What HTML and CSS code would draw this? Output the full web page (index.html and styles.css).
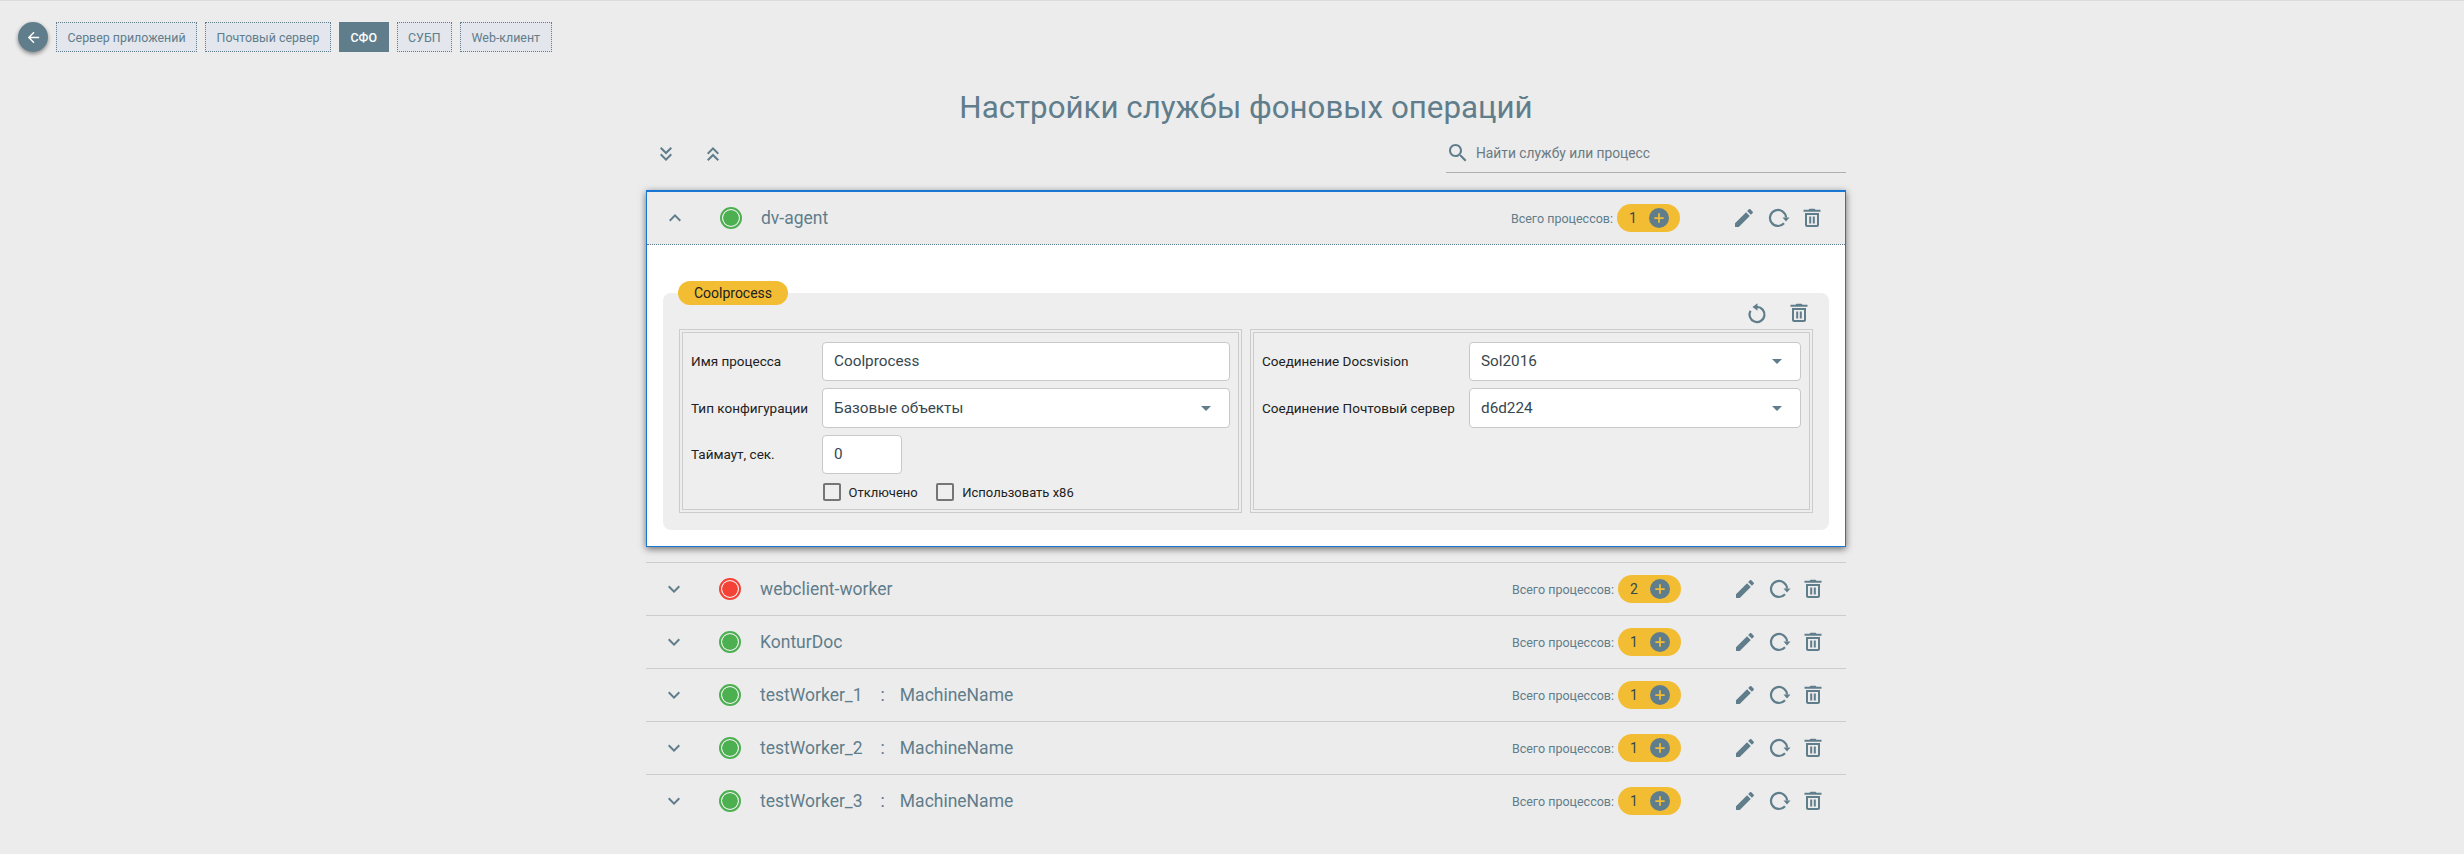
FILE: index.html
```html
<!DOCTYPE html>
<html lang="ru">
<head>
<meta charset="utf-8">
<title>Настройки службы фоновых операций</title>
<link rel="stylesheet" href="styles.css">
</head>
<body>
<svg class="defs" aria-hidden="true">
  <symbol id="i-edit" viewBox="0 0 24 24"><path d="M3 17.25V21h3.75L17.81 9.94l-3.75-3.75L3 17.25zM20.71 7.04c.39-.39.39-1.02 0-1.41l-2.34-2.34c-.39-.39-1.02-.39-1.41 0l-1.83 1.83 3.75 3.75 1.83-1.83z"/></symbol>
  <symbol id="i-refresh" viewBox="0 0 24 24"><path d="M18 17.3A8 8 0 1 1 20 11.5" fill="none" stroke="currentColor" stroke-width="2.2"/><path d="M16.5 11.5h7L20 15.5z"/></symbol>
  <symbol id="i-trash" viewBox="0 0 24 24"><path fill-rule="evenodd" d="M5 7h14v12c0 1.1-.9 2-2 2H7c-1.1 0-2-.9-2-2V7zm2 2v10h10V9H7zM3.5 3.7H8.5l1-1h5l1 1h5v2h-17z"/><path d="M9.2 10.5h2v7h-2zM12.8 10.5h2v7h-2z"/></symbol>
  <symbol id="i-reset" viewBox="0 0 24 24"><path d="M12 6A7.5 7.5 0 1 1 5.5 9.75" fill="none" stroke="currentColor" stroke-width="2.2"/><path d="M12.5 2.2v7.6L7.5 6z"/></symbol>
  <symbol id="i-down" viewBox="0 0 24 24"><path d="M7.41 8.59 12 13.17l4.59-4.58L18 10l-6 6-6-6z"/></symbol>
  <symbol id="i-up" viewBox="0 0 24 24"><path d="M7.41 15.41 12 10.83l4.59 4.58L18 14l-6-6-6 6z"/></symbol>
  <symbol id="i-ddown" viewBox="0 0 24 24"><path d="M18 6.41 16.59 5 12 9.58 7.41 5 6 6.41l6 6zM18 13l-1.41-1.41L12 16.17l-4.59-4.58L6 13l6 6z"/></symbol>
  <symbol id="i-dup" viewBox="0 0 24 24"><path d="M6 17.59 7.41 19 12 14.42 16.59 19 18 17.59l-6-6zM6 11l1.41 1.41L12 7.83l4.59 4.58L18 11l-6-6z"/></symbol>
  <symbol id="i-search" viewBox="0 0 24 24"><path d="M15.5 14h-.79l-.28-.27C15.41 12.59 16 11.11 16 9.5 16 5.91 13.09 3 9.5 3S3 5.91 3 9.5 5.91 16 9.5 16c1.61 0 3.09-.59 4.23-1.57l.27.28v.79l5 4.99L20.49 19l-4.99-5zm-6 0C7.01 14 5 11.99 5 9.5S7.01 5 9.5 5 14 7.01 14 9.5 11.99 14 9.5 14z"/></symbol>
  <symbol id="i-back" viewBox="0 0 24 24"><path d="M20 11H7.83l5.59-5.59L12 4l-8 8 8 8 1.41-1.41L7.83 13H20v-2z"/></symbol>
  <symbol id="i-plus" viewBox="0 0 24 24"><path d="M10.5 4h3v6.5H20v3h-6.5V20h-3v-6.5H4v-3h6.5z"/></symbol>
</svg>

<nav class="tabs">
  <button class="back"><svg class="ico-back"><use href="#i-back"/></svg></button>
  <a class="tab">Сервер приложений</a>
  <a class="tab">Почтовый сервер</a>
  <a class="tab tab-active">СФО</a>
  <a class="tab">СУБП</a>
  <a class="tab">Web-клиент</a>
</nav>

<main class="main">
  <h1 class="title">Настройки службы фоновых операций</h1>

  <div class="toolbar">
    <div class="tool-left">
      <svg class="ico"><use href="#i-ddown"/></svg>
      <svg class="ico"><use href="#i-dup"/></svg>
    </div>
    <div class="search">
      <svg class="ico search-ico"><use href="#i-search"/></svg>
      <span>Найти службу или процесс</span>
    </div>
  </div>

  <section class="card">
    <header class="row-head">
      <svg class="ico"><use href="#i-up"/></svg>
      <span class="status status-ok"></span>
      <span class="name">dv-agent</span>
      <span class="total">Всего процессов:</span>
      <span class="pill"><span class="count">1</span><span class="plus"><svg class="ico-plus"><use href="#i-plus"/></svg></span></span>
      <span class="actions">
        <svg class="ico"><use href="#i-edit"/></svg>
        <svg class="ico"><use href="#i-refresh"/></svg>
        <svg class="ico"><use href="#i-trash"/></svg>
      </span>
    </header>
    <div class="card-body">
      <span class="proc-tag">Coolprocess</span>
      <div class="panel">
        <div class="panel-tools">
          <svg class="ico"><use href="#i-reset"/></svg>
          <svg class="ico"><use href="#i-trash"/></svg>
        </div>
        <div class="sets">
          <div class="set">
            <div class="field">
              <label class="lbl lbl-a">Имя процесса</label>
              <div class="ctl">Coolprocess</div>
            </div>
            <div class="field">
              <label class="lbl lbl-a">Тип конфигурации</label>
              <div class="ctl ctl-select">Базовые объекты</div>
            </div>
            <div class="field">
              <label class="lbl lbl-a">Таймаут, сек.</label>
              <div class="ctl ctl-num">0</div>
            </div>
            <div class="checks">
              <span class="check"><span class="box"></span>Отключено</span>
              <span class="check"><span class="box"></span>Использовать x86</span>
            </div>
          </div>
          <div class="set">
            <div class="field">
              <label class="lbl lbl-b">Соединение Docsvision</label>
              <div class="ctl ctl-select">Sol2016</div>
            </div>
            <div class="field">
              <label class="lbl lbl-b">Соединение Почтовый сервер</label>
              <div class="ctl ctl-select">d6d224</div>
            </div>
          </div>
        </div>
      </div>
    </div>
  </section>

  <div class="rows">
    <div class="row-head row">
      <svg class="ico"><use href="#i-down"/></svg>
      <span class="status status-bad"></span>
      <span class="name">webclient-worker</span>
      <span class="total">Всего процессов:</span>
      <span class="pill"><span class="count">2</span><span class="plus"><svg class="ico-plus"><use href="#i-plus"/></svg></span></span>
      <span class="actions"><svg class="ico"><use href="#i-edit"/></svg><svg class="ico"><use href="#i-refresh"/></svg><svg class="ico"><use href="#i-trash"/></svg></span>
    </div>
    <div class="row-head row">
      <svg class="ico"><use href="#i-down"/></svg>
      <span class="status status-ok"></span>
      <span class="name">KonturDoc</span>
      <span class="total">Всего процессов:</span>
      <span class="pill"><span class="count">1</span><span class="plus"><svg class="ico-plus"><use href="#i-plus"/></svg></span></span>
      <span class="actions"><svg class="ico"><use href="#i-edit"/></svg><svg class="ico"><use href="#i-refresh"/></svg><svg class="ico"><use href="#i-trash"/></svg></span>
    </div>
    <div class="row-head row">
      <svg class="ico"><use href="#i-down"/></svg>
      <span class="status status-ok"></span>
      <span class="name">testWorker_1<span class="colon">:</span>MachineName</span>
      <span class="total">Всего процессов:</span>
      <span class="pill"><span class="count">1</span><span class="plus"><svg class="ico-plus"><use href="#i-plus"/></svg></span></span>
      <span class="actions"><svg class="ico"><use href="#i-edit"/></svg><svg class="ico"><use href="#i-refresh"/></svg><svg class="ico"><use href="#i-trash"/></svg></span>
    </div>
    <div class="row-head row">
      <svg class="ico"><use href="#i-down"/></svg>
      <span class="status status-ok"></span>
      <span class="name">testWorker_2<span class="colon">:</span>MachineName</span>
      <span class="total">Всего процессов:</span>
      <span class="pill"><span class="count">1</span><span class="plus"><svg class="ico-plus"><use href="#i-plus"/></svg></span></span>
      <span class="actions"><svg class="ico"><use href="#i-edit"/></svg><svg class="ico"><use href="#i-refresh"/></svg><svg class="ico"><use href="#i-trash"/></svg></span>
    </div>
    <div class="row-head row">
      <svg class="ico"><use href="#i-down"/></svg>
      <span class="status status-ok"></span>
      <span class="name">testWorker_3<span class="colon">:</span>MachineName</span>
      <span class="total">Всего процессов:</span>
      <span class="pill"><span class="count">1</span><span class="plus"><svg class="ico-plus"><use href="#i-plus"/></svg></span></span>
      <span class="actions"><svg class="ico"><use href="#i-edit"/></svg><svg class="ico"><use href="#i-refresh"/></svg><svg class="ico"><use href="#i-trash"/></svg></span>
    </div>
  </div>
</main>
</body>
</html>
```

FILE: styles.css
```css
* { box-sizing: border-box; }
html, body { margin: 0; padding: 0; }
body {
  height: 854px;
  overflow: hidden;
  background: #ececec;
  border-top: 1px solid #dcdcdc;
  font-family: Roboto, "Liberation Sans", sans-serif;
  color: #607d8b;
}
.defs { display: none; }

.tabs { display: flex; align-items: center; gap: 8px; padding: 21px 0 0 18px; height: 51px; }
.back {
  width: 30px; height: 30px; padding: 0; border: 0; border-radius: 50%;
  background: #607d8b; box-shadow: 0 2px 4px rgba(0,0,0,.45);
  display: flex; align-items: center; justify-content: center; color: #fff;
}
.ico-back { width: 17px; height: 17px; fill: currentColor; }
.tab {
  height: 30px; padding: 0 10.5px; display: flex; align-items: center;
  background: #e3e6ec; border: 1px dotted #607d8b; font-size: 12.4px; color: #607d8b;
}
.tab-active { background: #607d8b; border: 1px solid #607d8b; color: #fff; font-weight: 500; }

.main { width: 1200px; margin-left: 646px; }
.title { margin: 36px 0 0; font-size: 31.3px; line-height: 40px; font-weight: 400; text-align: center; color: #607d8b; }

.ico { width: 24px; height: 24px; fill: currentColor; color: #607d8b; flex: none; display: block; }

.toolbar { display: flex; justify-content: space-between; align-items: stretch; height: 39px; margin: 6px 0 17px; }
.tool-left { display: flex; align-items: center; gap: 23px; padding-left: 8px; }
.search {
  width: 400px; display: flex; align-items: center; gap: 6px; padding-bottom: 1px;
  border-bottom: 1px solid #b0b0b0; font-size: 13.8px; color: #6b7a82;
}

.card {
  border: 1px solid #1976d2; border-top-width: 2px;
  box-shadow: 0 2px 7px rgba(0,0,0,.55);
  background: #fff;
}
.row-head {
  display: flex; align-items: center; height: 53px; padding: 0 21px 0 16px;
  background: #ececec; border-bottom: 1px dotted #607d8b;
}
.status {
  width: 22px; height: 22px; margin-left: 33px; padding: 1px; flex: none;
  border-radius: 50%; border: 2px solid; background-clip: content-box;
  box-shadow: inset 0 0 0 1px #f4f4f4;
}
.status-ok { border-color: #4caf50; background-color: #4caf50; }
.status-bad { border-color: #f44336; background-color: #f44336; }
.name { margin-left: 19px; font-size: 17.5px; color: #607d8b; }
.colon { margin: 0 15px 0 18px; }
.total { margin-left: auto; font-size: 12.5px; color: #607d8b; }
.pill {
  width: 63px; height: 28px; margin-left: 4px; border-radius: 14px; background: #f2bd33;
  display: flex; align-items: center; flex: none;
}
.count { width: 32px; text-align: center; font-size: 14px; color: #37474f; }
.plus { width: 20px; height: 20px; border-radius: 50%; background: #607d8b; display: flex; align-items: center; justify-content: center; }
.ico-plus { width: 14px; height: 14px; fill: #f2bd33; }
.actions { display: flex; gap: 10px; margin-left: 52px; }

.card-body { padding: 36px 16px 16px; }
.proc-tag {
  display: block; position: relative; width: 110px; height: 24px; margin: 0 0 -12px 15px;
  border-radius: 12px; background: #f2bd33; color: #212121; font-size: 14px; line-height: 24px; text-align: center;
}
.panel { background: #eee; border-radius: 8px; padding: 8px 16px 17px; }
.panel-tools { display: flex; justify-content: flex-end; gap: 18px; padding-right: 2px; height: 28px; }
.sets { display: grid; grid-template-columns: 1fr 1fr; gap: 8px; }
.set {
  height: 184px; border: 4px double #ccc; padding: 8.5px 8px 0 8px;
  display: flex; flex-direction: column; gap: 7px;
}
.field { display: flex; align-items: center; }
.lbl { font-size: 13.5px; color: #212121; flex: none; }
.lbl-a { width: 131px; }
.lbl-b { width: 207px; }
.ctl {
  flex: 1; height: 39.5px; padding: 0 11px; display: flex; align-items: center; position: relative;
  background: #fff; border: 1px solid #c8c8c8; border-radius: 4px; font-size: 15.3px; color: #37474f;
}
.ctl-num { flex: none; width: 80px; }
.ctl-select::after {
  content: ""; position: absolute; right: 18px; top: 50%; margin-top: -2px;
  border: 5px solid transparent; border-top: 5px solid #607d8b; border-bottom: 0;
}
.checks { display: flex; gap: 18.5px; margin: 2px 0 0 131.5px; }
.check { display: flex; align-items: center; gap: 8px; font-size: 13px; color: #212121; }
.box { width: 18px; height: 18px; border: 2px solid #757575; border-radius: 2px; flex: none; }

.rows { margin-top: 15px; }
.row { border-bottom: 0; border-top: 1px solid #ccc; background: transparent; padding-right: 21px; }
```
